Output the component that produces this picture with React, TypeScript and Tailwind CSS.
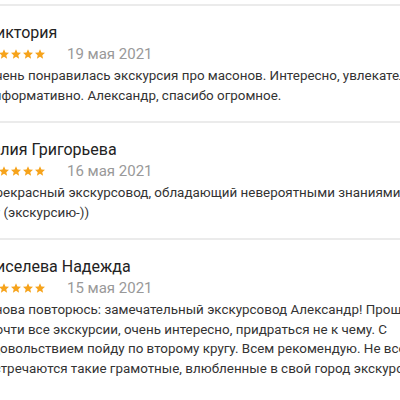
const reviews = [
  {
    name: "Виктория",
    date: "19 мая 2021",
    lines: [
      "Очень понравилась экскурсия про масонов. Интересно, увлекательно,",
      "информативно. Александр, спасибо огромное.",
    ],
  },
  {
    name: "Юлия Григорьева",
    date: "16 мая 2021",
    lines: [
      "Прекрасный экскурсовод, обладающий невероятными знаниями!",
      "ну (экскурсию-))",
    ],
  },
  {
    name: "Киселева Надежда",
    date: "15 мая 2021",
    lines: [
      "Снова повторюсь: замечательный экскурсовод Александр! Прошла",
      "Почти все экскурсии, очень интересно, придраться не к чему. С",
      "удовольствием пойду по второму кругу. Всем рекомендую. Не всегда",
      "встречаются такие грамотные, влюбленные в свой город экскурсоводы.",
    ],
  },
];

function Star() {
  return (
    <svg width="12" height="12" viewBox="0 0 24 24" className="shrink-0">
      <path
        d="M12 2.5l2.9 6.6 7.1.6-5.4 4.7 1.6 7-6.2-3.7-6.2 3.7 1.6-7L2 9.7l7.1-.6z"
        fill="#f6a31b"
      />
    </svg>
  );
}

export default function App() {
  return (
    <div
      className="w-[400px] h-[400px] overflow-hidden bg-white"
      style={{ fontFamily: "Roboto, 'Noto Sans', sans-serif" }}
    >
      <div className="h-[4px]" />
      {reviews.map((r) => (
        <div key={r.name} className="border-t-2 border-[#ebebeb] pb-4">
          <div className="-ml-[14px] w-[460px] pt-4">
            <div className="text-[16px] leading-[22px] text-[#222]">{r.name}</div>
            <div className="flex items-center h-5">
              <div className="flex">
                <Star />
                <Star />
                <Star />
                <Star />
                <Star />
              </div>
              <span className="ml-[21px] text-[15px] text-[#999]">{r.date}</span>
            </div>
            <div className="mt-[2px] text-[13.4px] leading-[19.5px] text-[#333]">
              {r.lines.map((l) => (
                <div key={l} className="whitespace-nowrap">
                  {l}
                </div>
              ))}
            </div>
          </div>
        </div>
      ))}
    </div>
  );
}
